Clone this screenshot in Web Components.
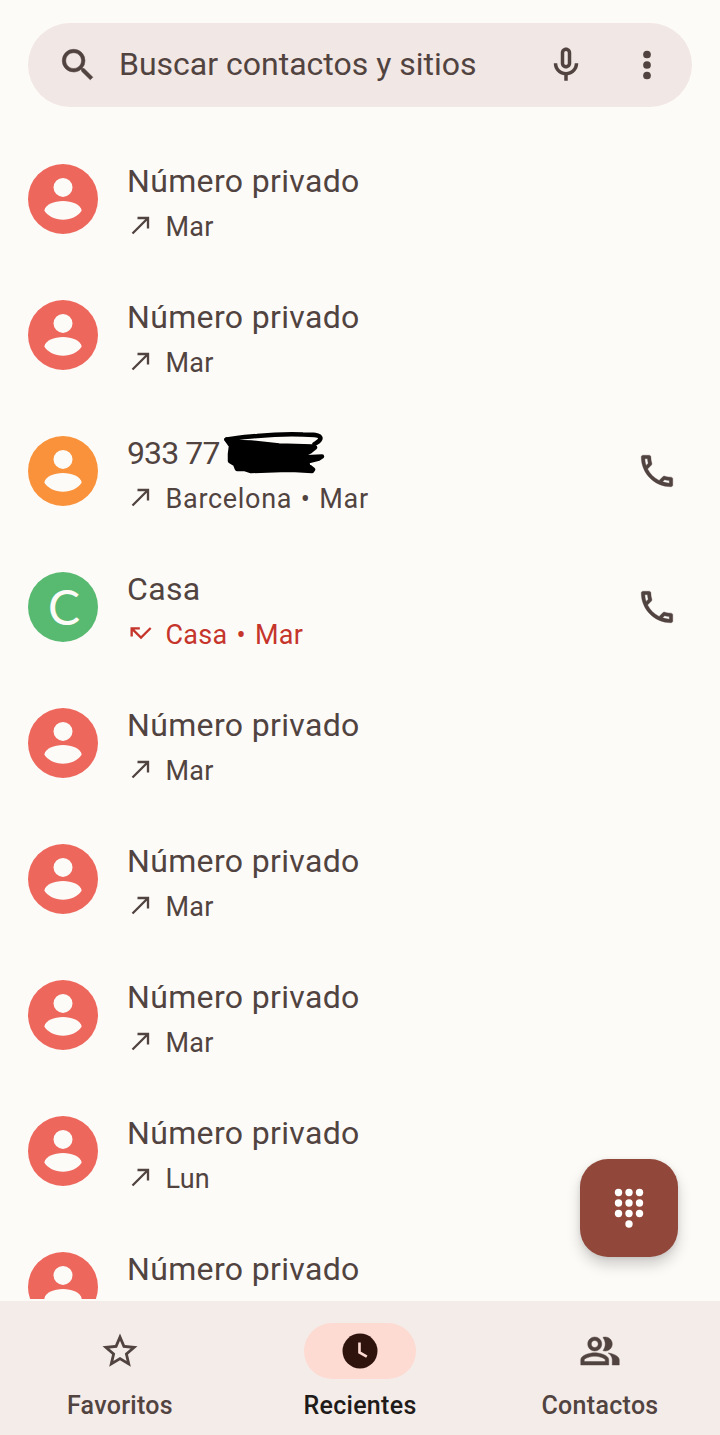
<!DOCTYPE html>
<html lang="es">
<head>
<meta charset="utf-8">
<title>Recientes</title>
<style>
  body {
    margin: 0;
    background: #fdfbf8;
    font-family: Roboto, "Liberation Sans", sans-serif;
    color: #51433f;
  }
</style>
</head>
<body>
<phone-app>
  <search-bar slot="top">Buscar contactos y sitios</search-bar>

  <call-entry name="Número privado">Mar</call-entry>
  <call-entry name="Número privado">Mar</call-entry>
  <call-entry class="number" name="933 77" color="#f9923b" callable redacted>Barcelona • Mar</call-entry>
  <call-entry class="home" name="Casa" color="#58b971" initial="C" callable missed>Casa • Mar</call-entry>
  <call-entry name="Número privado">Mar</call-entry>
  <call-entry name="Número privado">Mar</call-entry>
  <call-entry name="Número privado">Mar</call-entry>
  <call-entry name="Número privado">Lun</call-entry>
  <call-entry name="Número privado">Lun</call-entry>

  <dial-button slot="fab"></dial-button>

  <nav-bar slot="bottom">
    <nav-item icon="star">Favoritos</nav-item>
    <nav-item icon="clock" active>Recientes</nav-item>
    <nav-item icon="group">Contactos</nav-item>
  </nav-bar>
</phone-app>

<script>
const ICONS = {
  search: '<path stroke="currentColor" stroke-width=".3" d="M15.5 14h-.79l-.28-.27A6.471 6.471 0 0 0 16 9.5 6.5 6.5 0 1 0 9.5 16c1.61 0 3.09-.59 4.23-1.57l.27.28v.79l5 4.99L20.49 19l-4.99-5zm-6 0C7.01 14 5 11.99 5 9.5S7.01 5 9.5 5 14 7.01 14 9.5 11.99 14 9.5 14z"/>',
  mic: '<path d="M12 14c1.66 0 3-1.34 3-3V5c0-1.66-1.34-3-3-3S9 3.34 9 5v6c0 1.66 1.34 3 3 3zm-1-9c0-.55.45-1 1-1s1 .45 1 1v6c0 .55-.45 1-1 1s-1-.45-1-1V5zm6 6c0 2.76-2.24 5-5 5s-5-2.24-5-5H5c0 3.53 2.61 6.43 6 6.92V21h2v-3.08c3.39-.49 6-3.39 6-6.92h-2z"/>',
  more: '<circle cx="12" cy="6" r="2.2"/><circle cx="12" cy="12" r="2.2"/><circle cx="12" cy="18" r="2.2"/>',
  phone: '<path stroke="currentColor" stroke-width=".2" d="M6.54 5c.06.89.21 1.76.45 2.59l-1.2 1.2c-.41-1.2-.67-2.47-.76-3.79h1.51m9.86 12.02c.85.24 1.72.39 2.6.45v1.49c-1.32-.09-2.59-.35-3.8-.75l1.2-1.19M7.5 3H4c-.55 0-1 .45-1 1 0 9.39 7.61 17 17 17 .55 0 1-.45 1-1v-3.49c0-.55-.45-1-1-1-1.24 0-2.45-.2-3.57-.57-.1-.04-.21-.05-.31-.05-.26 0-.51.1-.71.29l-2.2 2.2c-2.83-1.45-5.15-3.76-6.59-6.59l2.2-2.2c.28-.28.36-.67.25-1.02C8.7 6.45 8.5 5.25 8.5 4c0-.55-.45-1-1-1z"/>',
  made: '<path d="M9 5v2h6.59L4 18.59 5.41 20 17 8.41V15h2V5z"/>',
  missed: '<path d="M19.59 7L12 14.59 6.41 9H11V7H3v8h2v-4.59l7 7 9-9z"/>',
  star: '<path d="M22 9.24l-7.19-.62L12 2 9.19 8.63 2 9.24l5.46 4.73L5.82 21 12 17.27 18.18 21l-1.63-7.03L22 9.24zM12 15.4l-3.76 2.27 1-4.28-3.32-2.88 4.38-.38L12 6.1l1.71 4.04 4.38.38-3.32 2.88 1 4.28L12 15.4z"/>',
  clock: '<circle cx="12" cy="12" r="10"/><path d="M11.7 7.2v5.6l4.2 2.4" fill="none" stroke="#fddbd2" stroke-width="1.5"/>',
  group: '<path stroke="currentColor" stroke-width=".25" d="M16.67 13.13C18.04 14.06 19 15.32 19 17v3h4v-3c0-2.18-3.57-3.47-6.33-3.87zM15 12c2.21 0 4-1.79 4-4s-1.79-4-4-4c-.47 0-.91.1-1.33.24C14.5 5.27 15 6.58 15 8s-.5 2.73-1.33 3.76c.42.14.86.24 1.33.24zM9 12c2.21 0 4-1.79 4-4s-1.79-4-4-4-4 1.79-4 4 1.79 4 4 4zm0-6c1.1 0 2 .9 2 2s-.9 2-2 2-2-.9-2-2 .9-2 2-2zM9 13c-2.67 0-8 1.34-8 4v3h16v-3c0-2.66-5.33-4-8-4zm6 5H3v-.99C3.2 16.29 6.3 15 9 15s5.8 1.29 6 2v1z"/>',
  dialpad: [6, 12, 18].map(x => [6, 12, 18].map(y => `<circle cx="${x}" cy="${y}" r="2.1"/>`).join('')).join('') + '<circle cx="12" cy="24" r="2.1"/>',
};

class UiIcon extends HTMLElement {
  connectedCallback() {
    this.attachShadow({mode: 'open'});
    this.shadowRoot.innerHTML = `
      <style>
        :host { display: block; width: 42px; height: 42px; flex: none; }
        svg { display: block; width: 100%; height: 100%; fill: currentColor; overflow: visible; }
      </style>
      <svg viewBox="0 0 24 24" aria-hidden="true">${ICONS[this.getAttribute('name')]}</svg>
    `;
  }
}

class PhoneApp extends HTMLElement {
  connectedCallback() {
    this.attachShadow({mode: 'open'});
    this.shadowRoot.innerHTML = `
      <style>
        :host {
          display: flex;
          flex-direction: column;
          position: relative;
          height: 1435px;
          overflow: hidden;
          box-sizing: border-box;
          padding-top: 23px;
        }
        main {
          flex: 1;
          min-height: 0;
          margin: 24px 0 2px;
          overflow: hidden;
        }
        /* floats over the list */
        .fab { position: absolute; right: 42px; bottom: 178px; }
      </style>
      <slot name="top"></slot>
      <main><slot></slot></main>
      <div class="fab"><slot name="fab"></slot></div>
      <slot name="bottom"></slot>
    `;
  }
}

class SearchBar extends HTMLElement {
  connectedCallback() {
    this.attachShadow({mode: 'open'});
    this.shadowRoot.innerHTML = `
      <style>
        :host {
          display: flex;
          align-items: center;
          flex: none;
          height: 84px;
          box-sizing: border-box;
          margin: 0 28px;
          padding: 0 24px 0 28.5px;
          border-radius: 42px;
          background: #f1e7e4;
        }
        .text {
          flex: 1;
          margin: -2px 0 0 20.5px;
          font-size: 32px;
          white-space: nowrap;
        }
        .more { margin-left: 39px; }
      </style>
      <ui-icon name="search"></ui-icon>
      <span class="text"><slot></slot></span>
      <ui-icon name="mic"></ui-icon>
      <ui-icon class="more" name="more"></ui-icon>
    `;
  }
}

class CallEntry extends HTMLElement {
  connectedCallback() {
    const name = this.getAttribute('name') || '';
    const color = this.getAttribute('color') || '#ed675c';
    const initial = this.getAttribute('initial');
    const missed = this.hasAttribute('missed');

    const face = initial ? `<span>${initial}</span>` : `
      <svg viewBox="0 0 70 70">
        <circle cx="35" cy="23.4" r="9.5"/>
        <path d="M16.3 46.5C17.5 40.5 26 37 35 37s17.5 3.5 18.7 9.5C50.5 52 43 55.7 35 55.7S19.5 52 16.3 46.5z"/>
      </svg>`;

    const scribble = `
      <svg class="scribble" viewBox="0 0 104 46">
        <path d="M3.5 7.5C14 6 24 4.5 34 4 50 2.5 66 2 80 2.5c10 0 17 0 17.5 3.500 0 3-3 4-6 6" fill="none"/>
        <path d="M3.5 7.5L12 10l16 .5 28 3 33 1 3 1-5 4-6 3-2 3 20-1-3 2-12 3 1 4 5 4-1 1.500-17-1-14 0-30 1-6-2-8 0-2-5-5-3 0-7 1-8z"/>
      </svg>`;

    this.attachShadow({mode: 'open'});
    this.shadowRoot.innerHTML = `
      <style>
        :host {
          display: flex;
          align-items: center;
          height: 136px;
          box-sizing: border-box;
          padding: 0 42px 0 28px;
        }
        :host(.number) { --name-spacing: -0.9px; --detail-spacing: 0.7px; --detail-gap: 1.2px; }
        :host(.home) { --detail-spacing: 0.3px; --detail-gap: 2px; }
        .avatar {
          display: flex;
          align-items: center;
          justify-content: center;
          flex: none;
          width: 70px;
          height: 70px;
          border-radius: 50%;
          background: ${color};
          color: #fdfbf8;
          font: 400 48px/66px Lato, sans-serif;
        }
        .avatar span { margin: -1px 0 0 2px; }
        .avatar svg { width: 70px; height: 70px; fill: #fdfbf8; }
        .info { flex: 1; margin-left: 29px; padding-top: 10px; }
        .name {
          position: relative;
          width: max-content;
          font-size: 32px;
          line-height: 44px;
          letter-spacing: var(--name-spacing, 0.35px);
        }
        .detail {
          display: flex;
          align-items: center;
          gap: 10.5px;
          margin-top: 1px;
          font-size: 27px;
          line-height: 46px;
          letter-spacing: var(--detail-spacing, 0.2px);
          word-spacing: var(--detail-gap, 0);
          white-space: nowrap;
          color: ${missed ? '#c5352b' : 'inherit'};
        }
        .detail ui-icon { width: 28px; height: 28px; margin-top: -4px; }
        .scribble {
          position: absolute;
          left: 96px;
          top: 1px;
          width: 104px;
          height: 46px;
          stroke: #000;
          stroke-width: 4.5;
          stroke-linecap: round;
          stroke-linejoin: round;
        }
      </style>
      <div class="avatar">${face}</div>
      <div class="info">
        <div class="name">${name}${this.hasAttribute('redacted') ? scribble : ''}</div>
        <div class="detail"><ui-icon name="${missed ? 'missed' : 'made'}"></ui-icon><slot></slot></div>
      </div>
      ${this.hasAttribute('callable') ? '<ui-icon name="phone"></ui-icon>' : ''}
    `;
  }
}

class DialButton extends HTMLElement {
  connectedCallback() {
    this.attachShadow({mode: 'open'});
    this.shadowRoot.innerHTML = `
      <style>
        :host {
          display: flex;
          align-items: center;
          justify-content: center;
          width: 98px;
          height: 98px;
          border-radius: 28px;
          background: #91473a;
          color: #fff;
          box-shadow: 0 8px 14px rgba(0, 0, 0, .18), 0 1px 5px rgba(0, 0, 0, .08);
        }
        ui-icon { margin-top: -11px; }
      </style>
      <ui-icon name="dialpad"></ui-icon>
    `;
  }
}

class NavBar extends HTMLElement {
  connectedCallback() {
    this.attachShadow({mode: 'open'});
    this.shadowRoot.innerHTML = `
      <style>
        :host {
          display: grid;
          grid-template-columns: repeat(3, 1fr);
          flex: none;
          height: 134px;
          background: #f4ece9;
        }
      </style>
      <slot></slot>
    `;
  }
}

class NavItem extends HTMLElement {
  connectedCallback() {
    const active = this.hasAttribute('active');
    this.attachShadow({mode: 'open'});
    this.shadowRoot.innerHTML = `
      <style>
        :host {
          display: flex;
          flex-direction: column;
          align-items: center;
          padding-top: 22px;
          font-size: 25px;
          font-weight: 500;
          letter-spacing: 0.3px;
          color: ${active ? '#201a18' : '#51433f'};
        }
        .pill {
          display: flex;
          align-items: center;
          justify-content: center;
          width: 112px;
          height: 56px;
          border-radius: 28px;
          background: ${active ? '#fddbd2' : 'none'};
          color: ${active ? '#2f130d' : 'inherit'};
        }
        .label { margin-top: 11px; line-height: 32px; }
      </style>
      <div class="pill"><ui-icon name="${this.getAttribute('icon')}"></ui-icon></div>
      <span class="label"><slot></slot></span>
    `;
  }
}

customElements.define('ui-icon', UiIcon);
customElements.define('phone-app', PhoneApp);
customElements.define('search-bar', SearchBar);
customElements.define('call-entry', CallEntry);
customElements.define('dial-button', DialButton);
customElements.define('nav-bar', NavBar);
customElements.define('nav-item', NavItem);
</script>
</body>
</html>
